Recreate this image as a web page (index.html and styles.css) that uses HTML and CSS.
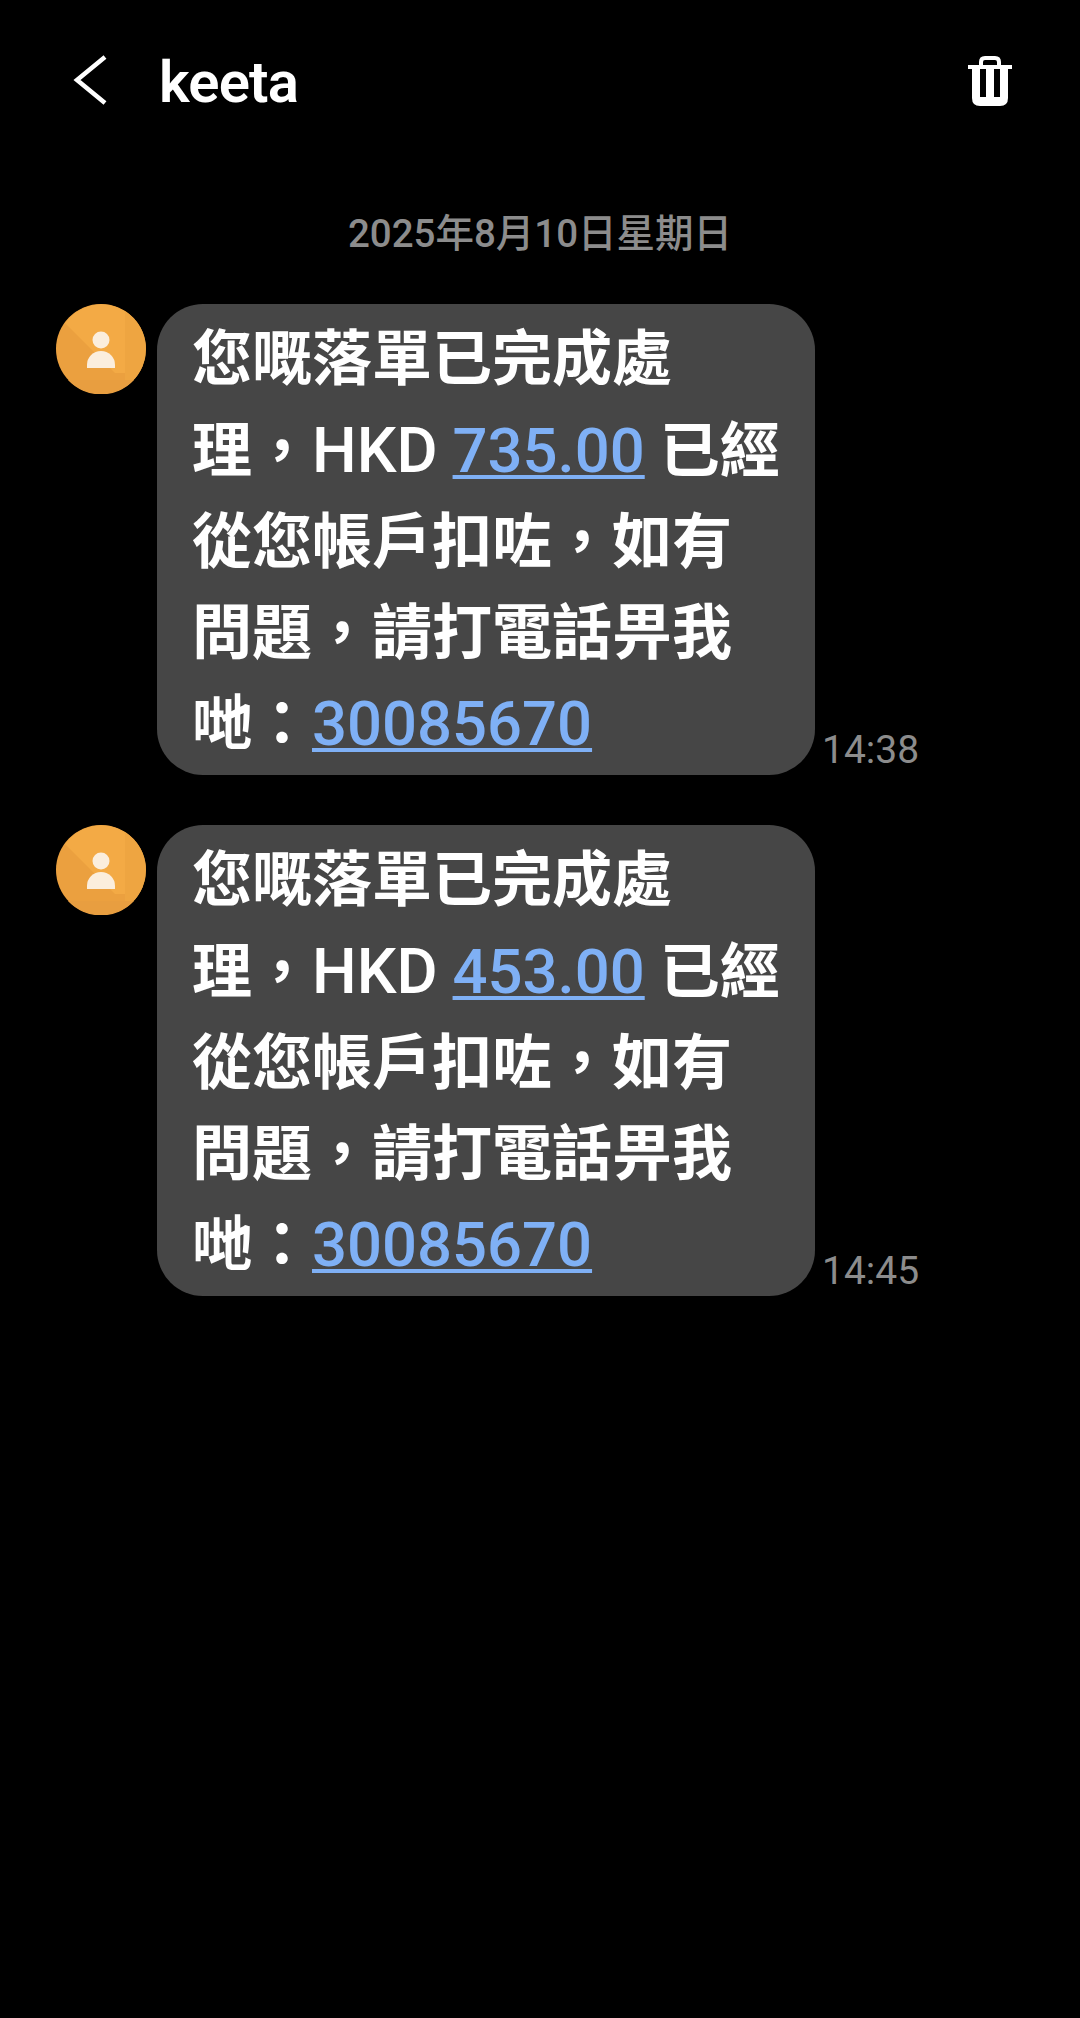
FILE: index.html
```html
<!DOCTYPE html>
<html lang="zh-Hant">
<head>
    <meta charset="UTF-8">
    <title>keeta</title>
    <link rel="stylesheet" href="styles.css">
</head>

<body>
    <svg class="defs" width="0" height="0">
        <symbol id="contact" viewBox="0 0 90 90">
            <circle cx="45" cy="45" r="45" fill="#eba03f"/>
            <path d="M9 19 L59 69 H69 V7 A45 45 0 0 0 9 19 Z" fill="#f3aa45"/>
            <path d="M69 7 A45 45 0 0 1 69 83 Z" fill="#eea541"/>
            <path d="M12 76 H78 A45 45 0 0 1 12 76 Z" fill="#e89e40"/>
            <circle cx="45" cy="36" r="8.5" fill="#fbeedd"/>
            <path d="M31 64 V61 A14 14 0 0 1 59 61 V64 Z" fill="#fbeedd"/>
        </symbol>
    </svg>

    <header class="topbar">
        <svg class="back" width="36" height="52" viewBox="0 0 36 52">
            <path d="M32 3 L4 26 L32 49" fill="none" stroke="#fff" stroke-width="4.5"/>
        </svg>
        <h1 class="title">keeta</h1>
        <svg class="trash" width="44" height="50" viewBox="0 0 44 50">
            <path d="M0 9 H44 V13 H40 V42 Q40 50 32 50 H12 Q4 50 4 42 V13 H0 Z M12 13 V41 H18 V13 Z M26 13 V41 H32 V13 Z" fill="#fff" fill-rule="evenodd"/>
            <path d="M13 10 V6 Q13 2 17 2 H27 Q31 2 31 6 V10" fill="none" stroke="#fff" stroke-width="4"/>
        </svg>
    </header>

    <div class="date">2025年8月10日星期日</div>

    <div class="message">
        <svg class="avatar" width="90" height="90"><use href="#contact"/></svg>
        <div class="bubble">您嘅落單已完成處理，<span class="latin">HKD</span> <a class="link">735.00</a> 已經從您帳戶扣咗，如有問題，請打電話畀我哋：<a class="link">30085670</a></div>
        <span class="time">14:38</span>
    </div>

    <div class="message">
        <svg class="avatar" width="90" height="90"><use href="#contact"/></svg>
        <div class="bubble">您嘅落單已完成處理，<span class="latin">HKD</span> <a class="link">453.00</a> 已經從您帳戶扣咗，如有問題，請打電話畀我哋：<a class="link">30085670</a></div>
        <span class="time">14:45</span>
    </div>
</body>
</html>
```

FILE: styles.css
```css
* {
    margin: 0;
    padding: 0;
    box-sizing: border-box;
}

body {
    font-family: Roboto, "Noto Sans CJK TC", sans-serif;
    background-color: #000;
    color: #fff;
    height: 2018px;
    overflow: hidden;
}

.defs {
    position: absolute;
}

.topbar {
    display: flex;
    align-items: center;
    height: 100px;
    margin-top: 32px;
    padding: 0 68px 0 73px;
}

.back {
    margin-top: -4px;
}

.trash {
    margin-top: -3px;
}

.title {
    flex: 1;
    margin-left: 50px;
    font-size: 58px;
    font-weight: 600;
    letter-spacing: -0.8px;
}

.date {
    margin-top: 77px;
    text-align: center;
    font-size: 38.5px;
    font-weight: 500;
    line-height: 50px;
    color: #8c8c8c;
}

.message {
    display: flex;
    align-items: flex-start;
    margin: 45px 0 0 56px;
}

.message + .message {
    margin-top: 50px;
}

.avatar {
    flex: none;
}

.bubble {
    width: 658px;
    height: 471px;
    margin-left: 11px;
    padding: 10px 28px 0 35px;
    background-color: #464646;
    border-radius: 46px;
    font-size: 60px;
    font-weight: 700;
    line-height: 91px;
}

.latin {
    font-size: 63px;
    font-weight: 500;
}

.link {
    color: #7fb0f5;
    font-size: 61.6px;
    font-weight: 500;
    text-decoration: underline;
    text-decoration-thickness: 4px;
    text-underline-offset: 3px;
}

.time {
    align-self: flex-end;
    margin-left: 7px;
    font-size: 39px;
    line-height: 50px;
    color: #8c8c8c;
}
```
